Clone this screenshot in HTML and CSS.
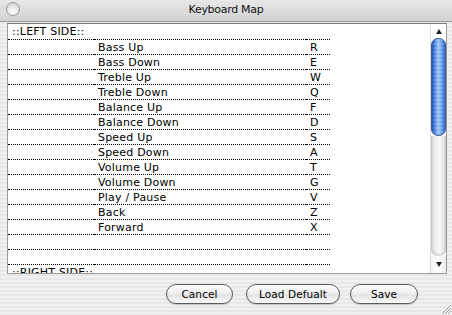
FILE: index.html
```html
<!DOCTYPE html>
<html lang="en">
<head>
    <meta charset="UTF-8">
    <title>Keyboard Map</title>
    <link rel="stylesheet" href="styles.css">
</head>
<body>
    <div class="window">
        <div class="titlebar">
            <span class="light"></span>
            <span class="title">Keyboard Map</span>
            <span></span>
        </div>
        <div class="content">
            <div class="scrollview">
                <div class="list">
                    <table class="keymap">
                        <tr><td>::LEFT SIDE::</td><td></td><td></td></tr>
                        <tr><td></td><td>Bass Up</td><td>R</td></tr>
                        <tr><td></td><td>Bass Down</td><td>E</td></tr>
                        <tr><td></td><td>Treble Up</td><td>W</td></tr>
                        <tr><td></td><td>Treble Down</td><td>Q</td></tr>
                        <tr><td></td><td>Balance Up</td><td>F</td></tr>
                        <tr><td></td><td>Balance Down</td><td>D</td></tr>
                        <tr><td></td><td>Speed Up</td><td>S</td></tr>
                        <tr><td></td><td>Speed Down</td><td>A</td></tr>
                        <tr><td></td><td>Volume Up</td><td>T</td></tr>
                        <tr><td></td><td>Volume Down</td><td>G</td></tr>
                        <tr><td></td><td>Play / Pause</td><td>V</td></tr>
                        <tr><td></td><td>Back</td><td>Z</td></tr>
                        <tr><td></td><td>Forward</td><td>X</td></tr>
                        <tr><td></td><td></td><td></td></tr>
                        <tr><td></td><td></td><td></td></tr>
                        <tr><td>::RIGHT SIDE::</td><td></td><td></td></tr>
                        <tr><td></td><td></td><td></td></tr>
                    </table>
                </div>
                <div class="scrollbar">
                    <div class="arrow-box"><span class="arrow up"></span></div>
                    <div class="thumb"></div>
                    <div class="groove"></div>
                    <div class="arrow-box bottom"><span class="arrow down"></span></div>
                </div>
            </div>
            <div class="buttons">
                <button class="btn btn-cancel">Cancel</button>
                <button class="btn btn-load">Load Defualt</button>
                <button class="btn btn-save">Save</button>
            </div>
            <svg class="grip" width="10" height="10" viewBox="0 0 10 10">
                <path d="M10 1 L1 10 M10 4 L4 10 M10 7 L7 10" stroke="#9a9a9a" stroke-width="1"/>
                <path d="M10 2 L2 10 M10 5 L5 10 M10 8 L8 10" stroke="#fafafa" stroke-width="1"/>
            </svg>
        </div>
    </div>
</body>
</html>
```

FILE: styles.css
```css
* { margin: 0; padding: 0; box-sizing: border-box; }
body {
    font-family: 'DejaVu Sans', sans-serif;
    background: #e9e9e9;
}
.window {
    width: 452px;
    height: 315px;
    overflow: hidden;
    background: repeating-linear-gradient(to bottom, #f0f0f0 0, #f0f0f0 2px, #e8e8e8 2px, #e8e8e8 4px);
}
.titlebar {
    height: 22px;
    display: grid;
    grid-template-columns: 1fr auto 1fr;
    align-items: start;
    background: linear-gradient(to bottom, #e8e8e8, #d2d2d2);
    border-bottom: 1px solid #9c9c9c;
}
.light {
    width: 14px;
    height: 14px;
    margin: 2px 0 0 6px;
    border-radius: 50%;
    border: 1px solid #9a9a9a;
    background: radial-gradient(circle at 50% 75%, #ffffff 0, #ececec 45%, #c6c6c6 100%);
}
.title {
    font-size: 11px;
    line-height: 19px;
    letter-spacing: -0.3px;
    color: #111;
}
.content {
    padding: 1px 0 0 7px;
    position: relative;
    height: 293px;
}
.scrollview {
    width: 440px;
    height: 251px;
    display: flex;
    border: 1px solid #9a9a9a;
    border-top-color: #7c7c7c;
    background: #fff;
}
.list {
    width: 422px;
    overflow: hidden;
}
.keymap {
    width: 322px;
    border-collapse: collapse;
    table-layout: fixed;
    font-size: 11px;
    letter-spacing: 0.2px;
    color: #000;
}
.keymap td {
    height: 15px;
    padding: 2px 0 0 4px;
    line-height: 12px;
    white-space: nowrap;
    vertical-align: top;
    border-bottom: 1px dotted #000;
}
.keymap td:nth-child(1) { width: 86px; }
.keymap td:nth-child(2) { width: 212px; }
.keymap td:nth-child(3) { width: 24px; }
.scrollbar {
    width: 16px;
    display: flex;
    flex-direction: column;
    border-left: 1px solid #dcdcdc;
    background: #fff;
}
.arrow-box {
    height: 14px;
    display: flex;
    justify-content: center;
    align-items: center;
}
.arrow-box.bottom {
    height: 17px;
    background: linear-gradient(to right, #f4f4f4, #fff 50%, #ececec);
}
.arrow {
    width: 0;
    height: 0;
    border-left: 3px solid transparent;
    border-right: 3px solid transparent;
}
.arrow.up { border-bottom: 5px solid #222; }
.arrow.down { border-top: 5px solid #222; }
.thumb {
    height: 98px;
    border-radius: 7px;
    border: 1px solid #3a5b94;
    background:
        repeating-linear-gradient(to bottom, rgba(255,255,255,0.08) 0, rgba(255,255,255,0.08) 2px, rgba(0,0,0,0.03) 2px, rgba(0,0,0,0.03) 4px),
        linear-gradient(to right, #1f4fae, #4f8be6 22%, #a6cbfa 48%, #70a9f4 72%, #2d62c6);
}
.groove {
    flex: 1;
    border-radius: 0 0 7px 7px;
    background: linear-gradient(to right, #cfcfcf, #ececec 25%, #fafafa 55%, #e6e6e6 85%, #cbcbcb);
    box-shadow: inset 0 -2px 2px rgba(0,0,0,0.12);
}
.buttons {
    display: flex;
    margin-top: 10px;
    height: 20px;
}
.btn {
    height: 20px;
    font-family: 'DejaVu Sans', sans-serif;
    font-size: 10.5px;
    letter-spacing: 0.1px;
    color: #000;
    border: 1px solid #5c5c5c;
    border-radius: 10px;
    background: linear-gradient(to bottom, #fdfdfd 0%, #efefef 45%, #e3e3e3 55%, #f9f9f9 100%);
    box-shadow: 0 1px 1px rgba(0,0,0,0.18);
}
.btn-cancel { width: 67px; margin-left: 159px; }
.btn-load { width: 94px; margin-left: 13px; }
.btn-save { width: 68px; margin-left: 10px; }
.grip {
    position: absolute;
    right: 1px;
    bottom: 1px;
}
```
